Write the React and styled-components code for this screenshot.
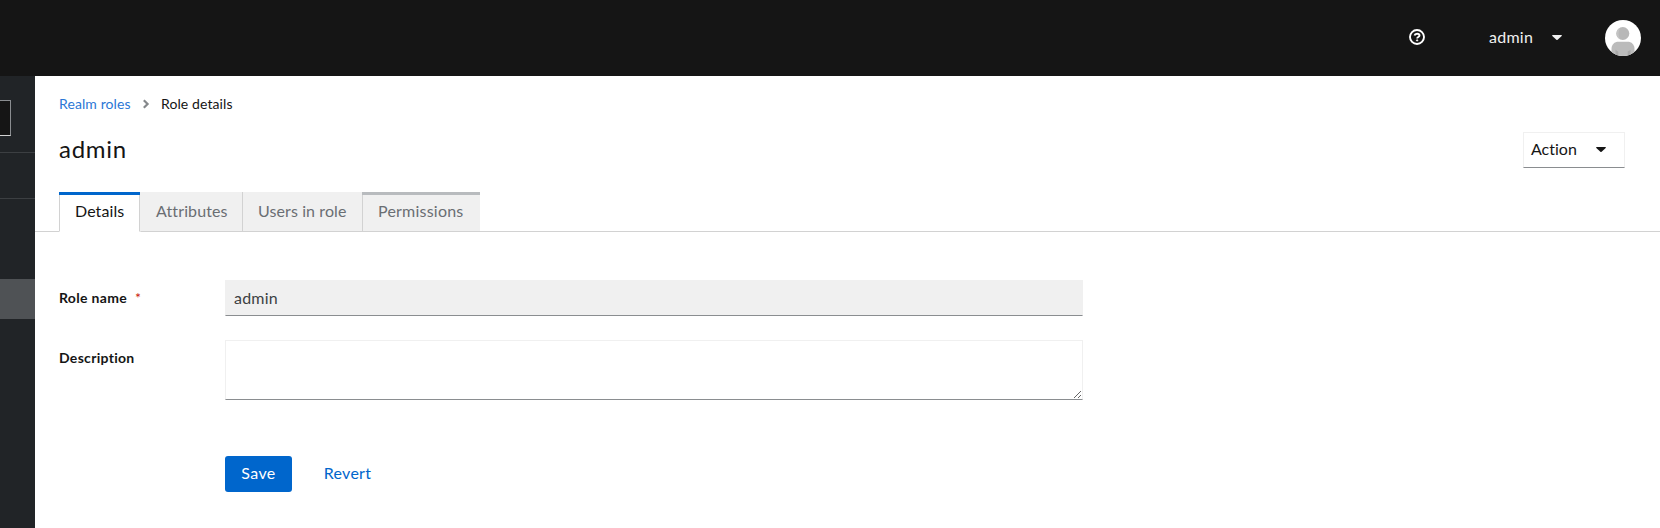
import React from "react";
import styled, { createGlobalStyle } from "styled-components";

const GlobalStyle = createGlobalStyle`
  * { box-sizing: border-box; }
  body {
    margin: 0;
    background: #fff;
    color: #151515;
    font: 400 16px/24px Lato, "Open Sans", sans-serif;
    font-variant-ligatures: none;
  }
`;

const Page = styled.div`
  display: flex;
  flex-direction: column;
  height: 528px;
  overflow: hidden;
`;

const Masthead = styled.header`
  display: flex;
  align-items: center;
  justify-content: flex-end;
  height: 76px;
  flex: none;
  padding-right: 19px;
  background: #151515;
  color: #f0f0f0;
`;

const HelpIcon = styled.svg`
  width: 16px;
  height: 16px;
  margin: 0 64px 2px 0;
`;

const UserToggle = styled.div`
  display: flex;
  align-items: center;
  width: 73px;
  margin-right: 43px;
  padding-bottom: 2px;
  justify-content: space-between;
`;

const Label = styled.span`
  letter-spacing: ${(p) => p.$track || 0}px;
  white-space: nowrap;
`;

const CaretSvg = styled.svg`
  width: 10px;
  height: 5px;
  flex: none;
`;

const Avatar = styled.svg`
  width: 36px;
  height: 36px;
`;

const Body = styled.div`
  display: flex;
  flex: 1;
`;

const Sidebar = styled.aside`
  width: 35px;
  flex: none;
  padding-top: 24px;
  background: #212427;
`;

const RealmSelect = styled.div`
  width: 11px;
  height: 36px;
  margin-bottom: 16px;
  background: #151515;
  border: 1px solid #8a8d90;
  border-bottom-color: #d2d2d2;
  border-left: 0;
`;

const NavSection = styled.div`
  height: ${(p) => p.$height}px;
  border-top: 1px solid #3c3f42;
`;

const NavCurrent = styled.div`
  height: 40px;
  background: #4f5255;
`;

const Main = styled.main`
  flex: 1;
  min-width: 0;
`;

const Breadcrumb = styled.nav`
  display: flex;
  align-items: center;
  height: 21px;
  margin: 17px 24px 0;
  font-size: 14px;
`;

const Crumb = styled.a`
  color: #2b77d6;
  letter-spacing: ${(p) => p.$track}px;
  width: 72px;
  white-space: nowrap;
`;

const Chevron = styled.svg`
  width: 8px;
  height: 10px;
  margin: 0 11px 0 11px;
`;

const TitleRow = styled.div`
  display: flex;
  align-items: center;
  justify-content: space-between;
  height: 36px;
  margin: 18px 35px 24px 24px;
`;

const Title = styled.h1`
  margin: 0 0 2px;
  font-size: 24px;
  font-weight: 400;
  line-height: 36px;
  letter-spacing: ${(p) => p.$track}px;
`;

const ActionToggle = styled.div`
  display: flex;
  align-items: center;
  justify-content: space-between;
  width: 102px;
  height: 36px;
  padding: 0 18px 2px 7px;
  border: 1px solid #f0f0f0;
  border-bottom-color: #8a8d90;
`;

const Tabs = styled.div`
  display: flex;
  height: 40px;
  padding-left: 24px;
  box-shadow: inset 0 -1px #d2d2d2;
`;

const Tab = styled.div`
  position: relative;
  width: ${(p) => p.$width}px;
  padding: 7px 0 0 15px;
  border-left: 1px solid ${(p) => (p.$bare ? "#f0f0f0" : "#d2d2d2")};
  border-bottom: 1px solid #d2d2d2;
  background: #f0f0f0;
  color: #6a6e73;
  ${(p) =>
    p.$current &&
    `background: #fff; color: #151515; border-right: 1px solid #d2d2d2; border-bottom-color: #fff;`}

  &::before {
    content: "";
    position: absolute;
    top: 0;
    left: -1px;
    right: ${(p) => (p.$current ? -1 : 0)}px;
    height: ${(p) => (p.$accent ? 3 : 0)}px;
    background: ${(p) => p.$accent || "none"};
  }
`;

const Form = styled.form`
  display: grid;
  grid-template-columns: 166px 858px;
  row-gap: 24px;
  padding: 48px 0 0 24px;
`;

const FieldLabel = styled.label`
  display: flex;
  gap: 8px;
  padding-top: 7px;
  font-size: 14px;
  font-weight: 700;
  line-height: 21px;
`;

const Required = styled.span`
  color: #c9190b;
  font-weight: 400;
`;

const TextInput = styled.input`
  height: 36px;
  padding: 0 8px 2px;
  border: 1px solid #f0f0f0;
  border-bottom-color: #8a8d90;
  border-radius: 0;
  background: #f0f0f0;
  color: #3c3f42;
  font: inherit;
  letter-spacing: ${(p) => p.$track}px;
`;

const TextArea = styled.textarea`
  display: block;
  height: 60px;
  padding: 5px 8px;
  border: 1px solid #f0f0f0;
  border-bottom-color: #8a8d90;
  font: inherit;
  resize: vertical;
`;

const Actions = styled.div`
  display: flex;
  grid-column: 2;
  gap: 16px;
  margin-top: 32px;
`;

const Button = styled.button`
  width: ${(p) => p.$width}px;
  height: 36px;
  padding: 0 0 2px;
  border: 0;
  border-radius: 3px;
  background: ${(p) => (p.$primary ? "#06c" : "transparent")};
  color: ${(p) => (p.$primary ? "#fff" : "#06c")};
  font: inherit;
`;

const Caret = () => (
  <CaretSvg viewBox="0 0 10 5">
    <path d="M.7 0h8.6q.9.2.4.9L5.6 4.7q-.6.5-1.2 0L.3.9Q-.2.2.7 0Z" fill="currentColor" />
  </CaretSvg>
);

export default function App() {
  return (
    <Page>
      <GlobalStyle />
      <Masthead>
        <HelpIcon viewBox="0 0 16 16" fill="none" stroke="#fff">
          <circle cx="8" cy="8" r="7" strokeWidth="1.9" />
          <path d="M5.5 6.5C5.8 5.2 6.8 4.7 8.1 4.7c1.4 0 2.4.7 2.4 1.8 0 1.5-2.3 1.5-2.3 2.9" strokeWidth="1.9" />
          <circle cx="8.1" cy="11.4" r=".7" fill="#fff" strokeWidth=".8" />
        </HelpIcon>
        <UserToggle>
          <Label $track={0.25}>admin</Label>
          <Caret />
        </UserToggle>
        <Avatar viewBox="0 0 36 36">
          <defs>
            <clipPath id="avatarClip"><circle cx="18" cy="18" r="18" /></clipPath>
          </defs>
          <g clipPath="url(#avatarClip)">
            <path fill="#fff" d="M0 0h36v36H0z" />
            <circle cx="17.8" cy="13.5" r="6.5" fill="#b8b8b8" />
            <path fill="#c4c4c4" d="M15.2 7.7a6.5 6.5 0 0 0 0 11.7c-2.1-3.3-2.1-8.4 0-11.7Z" />
            <path fill="#bbb" d="M6.5 36v-7c0-4.5 3-7.2 7-7.2h9c4 0 7 2.7 7 7.2v7Z" />
            <path fill="#a8a8a8" d="M10.5 36v-6.3l2.8 2V36ZM25.5 36v-6l-2.8 1.5V36Z" />
          </g>
        </Avatar>
      </Masthead>
      <Body>
        <Sidebar>
          <RealmSelect />
          <NavSection $height={46} />
          <NavSection $height={81} />
          <NavCurrent />
        </Sidebar>
        <Main>
          <Breadcrumb>
            <Crumb $track={0.1}>Realm roles</Crumb>
            <Chevron viewBox="0 0 8 10">
              <path d="M1.8 1.2 5.6 5 1.8 8.8" fill="none" stroke="#85888b" strokeWidth="2.2" />
            </Chevron>
            <Label $track={0.1}>Role details</Label>
          </Breadcrumb>
          <TitleRow>
            <Title $track={0.75}>admin</Title>
            <ActionToggle>
              <Label>Action</Label>
              <Caret />
            </ActionToggle>
          </TitleRow>
          <Tabs>
            <Tab $width={81} $current $accent="#06c"><Label $track={0.08}>Details</Label></Tab>
            <Tab $width={102} $bare><Label $track={0.12}>Attributes</Label></Tab>
            <Tab $width={120}><Label $track={0.1}>Users in role</Label></Tab>
            <Tab $width={118} $accent="#b8bbbe"><Label $track={0.22}>Permissions</Label></Tab>
          </Tabs>
          <Form>
            <FieldLabel>
              <Label $track={0.33}>Role name</Label>
              <Required>*</Required>
            </FieldLabel>
            <TextInput defaultValue="admin" readOnly $track={0.2} />
            <FieldLabel><Label $track={0.3}>Description</Label></FieldLabel>
            <TextArea />
            <Actions>
              <Button type="button" $primary $width={67}><Label $track={0.4}>Save</Label></Button>
              <Button type="button" $width={79}><Label $track={0.25}>Revert</Label></Button>
            </Actions>
          </Form>
        </Main>
      </Body>
    </Page>
  );
}
